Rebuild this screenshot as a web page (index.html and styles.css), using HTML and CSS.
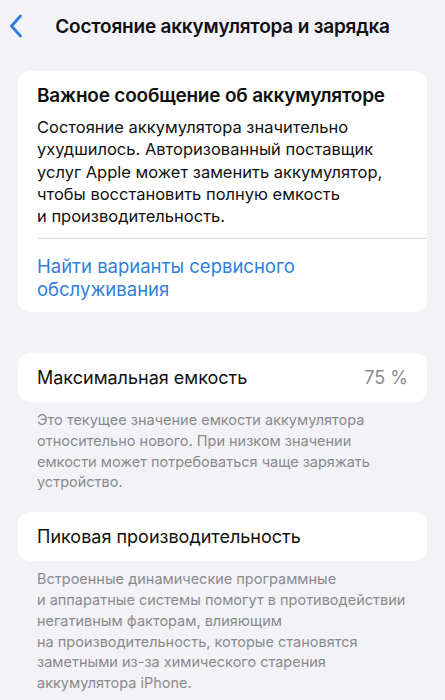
FILE: index.html
```html
<!DOCTYPE html>
<html lang="ru">
<head>
  <meta charset="UTF-8" />
  <title>Состояние аккумулятора и зарядка</title>
  <link rel="stylesheet" href="styles.css">
</head>
<body>
  <header class="nav">
    <a class="back" href="#">
      <svg width="14" height="24" viewBox="0 0 14 24">
        <path d="M11.5 2 L2.5 12 L11.5 22" fill="none" stroke="#2d7ee0" stroke-width="2.8" stroke-linecap="round" stroke-linejoin="round"/>
      </svg>
    </a>
    <h1>Состояние аккумулятора и зарядка</h1>
  </header>

  <main>
    <section class="card alert">
      <h2>Важное сообщение об аккумуляторе</h2>
      <p>Состояние аккумулятора значительно ухудшилось. Авторизованный поставщик услуг Apple может заменить аккумулятор, чтобы восстановить полную емкость и&nbsp;производительность.</p>
      <div class="divider"></div>
      <a class="link" href="#">Найти варианты сервисного обслуживания</a>
    </section>

    <section class="group">
      <div class="card row">
        <span>Максимальная емкость</span>
        <span class="value">75 %</span>
      </div>
      <p class="note">Это текущее значение емкости аккумулятора относительно нового. При низком значении емкости может потребоваться чаще заряжать устройство.</p>
    </section>

    <section class="group">
      <div class="card row">
        <span>Пиковая производительность</span>
      </div>
      <p class="note">Встроенные динамические программные<br>и аппаратные системы помогут в противодействии негативным факторам, влияющим<br>на производительность, которые становятся заметными из-за химического старения аккумулятора iPhone.</p>
    </section>
  </main>
</body>
</html>
```

FILE: styles.css
```css
html, body {
  margin: 0;
}

body {
  background: #f2f2f7;
  font-family: Inter, "Noto Sans", sans-serif;
  color: #111;
  height: 700px;
  overflow: hidden;
}

.nav {
  display: flex;
  align-items: center;
  justify-content: center;
  height: 52px;
  position: relative;
}

.back {
  position: absolute;
  left: 9px;
  top: 14px;
  display: block;
  line-height: 0;
}

h1 {
  margin: 0;
  font-size: 19px;
  font-weight: 600;
  letter-spacing: -0.2px;
}

main {
  padding: 19px 18px 0;
}

.card {
  background: #fff;
  border-radius: 12px;
}

.alert {
  padding: 12px 0 10.5px 19px;
}

h2 {
  margin: 0 0 7px;
  font-size: 19px;
  font-weight: 600;
  line-height: 26px;
  letter-spacing: -0.2px;
}

.alert p {
  margin: 0 19px 0 0;
  font-size: 16.5px;
  line-height: 22.3px;
}

.divider {
  height: 1px;
  background: #dcdce0;
  margin: 11px 0 16px;
}

.link {
  display: block;
  color: #2f7fdc;
  text-decoration: none;
  font-size: 18.5px;
  line-height: 23px;
  padding-right: 19px;
}

.group {
  margin-top: 41px;
}

.group + .group {
  margin-top: 19px;
}

.row {
  display: flex;
  justify-content: space-between;
  align-items: center;
  height: 49px;
  padding: 0 19px;
  font-size: 18px;
}

.value {
  color: #8a8a8e;
}

.note {
  margin: 8px 0 0;
  padding: 0 19px;
  font-size: 14.5px;
  line-height: 20.8px;
  color: #8a8a8e;
}
```
